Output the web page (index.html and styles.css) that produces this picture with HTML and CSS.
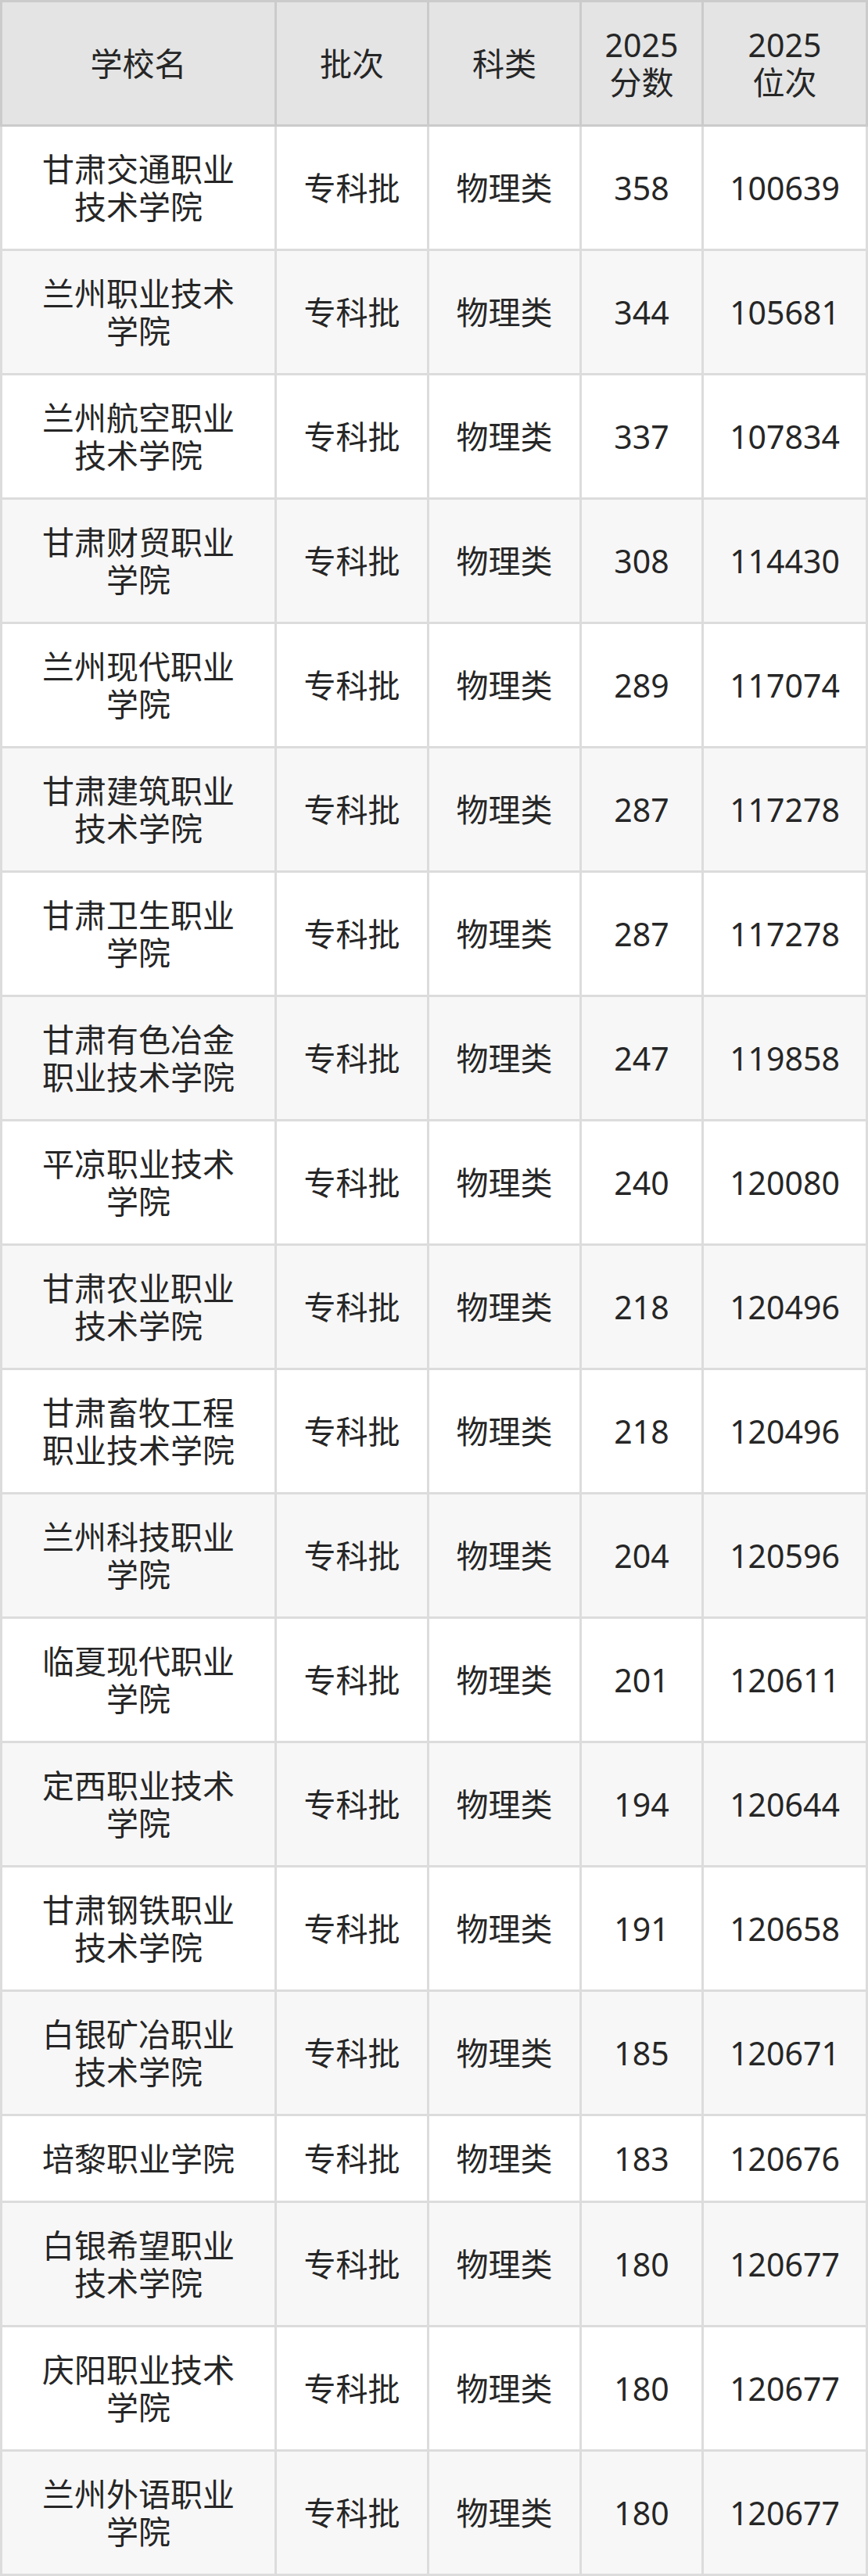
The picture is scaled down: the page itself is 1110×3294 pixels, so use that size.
FILE: index.html
```html
<!DOCTYPE html>
<html lang="zh-CN">
<head>
<meta charset="utf-8">
<title>甘肃专科批物理类 2025</title>
<link rel="stylesheet" href="styles.css">
</head>
<body>
<table class="score-table">
  <colgroup>
    <col class="c-name"><col class="c-batch"><col class="c-type"><col class="c-score"><col class="c-rank">
  </colgroup>
  <thead>
    <tr><th>学校名</th><th>批次</th><th>科类</th><th>2025<br>分数</th><th>2025<br>位次</th></tr>
  </thead>
  <tbody>
    <tr><td>甘肃交通职业技术学院</td><td>专科批</td><td>物理类</td><td>358</td><td>100639</td></tr>
    <tr><td>兰州职业技术学院</td><td>专科批</td><td>物理类</td><td>344</td><td>105681</td></tr>
    <tr><td>兰州航空职业技术学院</td><td>专科批</td><td>物理类</td><td>337</td><td>107834</td></tr>
    <tr><td>甘肃财贸职业学院</td><td>专科批</td><td>物理类</td><td>308</td><td>114430</td></tr>
    <tr><td>兰州现代职业学院</td><td>专科批</td><td>物理类</td><td>289</td><td>117074</td></tr>
    <tr><td>甘肃建筑职业技术学院</td><td>专科批</td><td>物理类</td><td>287</td><td>117278</td></tr>
    <tr><td>甘肃卫生职业学院</td><td>专科批</td><td>物理类</td><td>287</td><td>117278</td></tr>
    <tr><td>甘肃有色冶金职业技术学院</td><td>专科批</td><td>物理类</td><td>247</td><td>119858</td></tr>
    <tr><td>平凉职业技术学院</td><td>专科批</td><td>物理类</td><td>240</td><td>120080</td></tr>
    <tr><td>甘肃农业职业技术学院</td><td>专科批</td><td>物理类</td><td>218</td><td>120496</td></tr>
    <tr><td>甘肃畜牧工程职业技术学院</td><td>专科批</td><td>物理类</td><td>218</td><td>120496</td></tr>
    <tr><td>兰州科技职业学院</td><td>专科批</td><td>物理类</td><td>204</td><td>120596</td></tr>
    <tr><td>临夏现代职业学院</td><td>专科批</td><td>物理类</td><td>201</td><td>120611</td></tr>
    <tr><td>定西职业技术学院</td><td>专科批</td><td>物理类</td><td>194</td><td>120644</td></tr>
    <tr><td>甘肃钢铁职业技术学院</td><td>专科批</td><td>物理类</td><td>191</td><td>120658</td></tr>
    <tr><td>白银矿冶职业技术学院</td><td>专科批</td><td>物理类</td><td>185</td><td>120671</td></tr>
    <tr><td>培黎职业学院</td><td>专科批</td><td>物理类</td><td>183</td><td>120676</td></tr>
    <tr><td>白银希望职业技术学院</td><td>专科批</td><td>物理类</td><td>180</td><td>120677</td></tr>
    <tr><td>庆阳职业技术学院</td><td>专科批</td><td>物理类</td><td>180</td><td>120677</td></tr>
    <tr><td>兰州外语职业学院</td><td>专科批</td><td>物理类</td><td>180</td><td>120677</td></tr>
  </tbody>
</table>
</body>
</html>
```

FILE: styles.css
```css
html, body {
  margin: 0;
  padding: 0;
  background: #ffffff;
}

body {
  font-family: "Noto Sans", "Noto Sans CJK SC", sans-serif;
  color: #262626;
}

.score-table {
  width: 1110px;
  table-layout: fixed;
  border-collapse: separate;
  border-spacing: 0;
}

.c-name { width: 354px; }
.c-batch { width: 195px; }
.c-type { width: 195px; }
.c-score { width: 156px; }
.c-rank { width: 210px; }

.score-table th,
.score-table td {
  box-sizing: border-box;
  padding: 30px 10px;
  font-size: 41px;
  line-height: 48px;
  font-weight: 400;
  text-align: center;
  vertical-align: middle;
}

.score-table th {
  background: #e4e4e4;
  border-top: 3px solid #cbcbcb;
  border-right: 3px solid #cbcbcb;
  border-bottom: 3px solid #cbcbcb;
}

.score-table th:first-child {
  border-left: 3px solid #cbcbcb;
}

.score-table td {
  background: #ffffff;
  border-right: 3px solid #dcdcdc;
  border-bottom: 3px solid #dcdcdc;
}

.score-table td:first-child,
.score-table th:first-child {
  padding-left: 40px;
  padding-right: 40px;
}

.score-table td:first-child {
  border-left: 3px solid #dcdcdc;
}

.score-table tbody tr:nth-child(even) td {
  background: #f7f7f7;
}
```
